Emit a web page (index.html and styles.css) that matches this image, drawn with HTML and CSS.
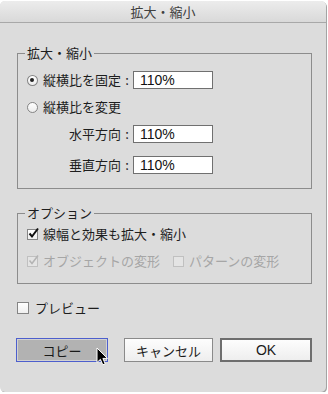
FILE: index.html
```html
<!DOCTYPE html>
<html lang="ja">
<head>
    <meta charset="UTF-8">
    <meta name="viewport" content="width=device-width, initial-scale=1.0">
    <title>拡大・縮小</title>
    <link rel="stylesheet" href="styles.css">
</head>
<body>

<div class="window">
    <div class="titlebar">拡大・縮小</div>
    <div class="content">
        <fieldset class="group group-scale">
            <legend>拡大・縮小</legend>
            <div class="row">
                <span class="caption"><span class="radio checked"></span>縦横比を固定</span>
                <span class="colon">:</span>
                <span class="input">110%</span>
            </div>
            <div class="row">
                <span class="radio"></span>縦横比を変更
            </div>
            <div class="row">
                <span class="caption right">水平方向</span>
                <span class="colon">:</span>
                <span class="input">110%</span>
            </div>
            <div class="row row-last">
                <span class="caption right">垂直方向</span>
                <span class="colon">:</span>
                <span class="input">110%</span>
            </div>
        </fieldset>

        <fieldset class="group group-options">
            <legend>オプション</legend>
            <div class="row">
                <span class="checkbox checked">
                    <svg width="13" height="13" viewBox="0 0 13 13"><path d="M2.5 6.5 L5 9.5 L11 1.5" fill="none" stroke="#111" stroke-width="2"/></svg>
                </span>線幅と効果も拡大・縮小
            </div>
            <div class="row disabled">
                <span class="checkbox checked">
                    <svg width="13" height="13" viewBox="0 0 13 13"><path d="M2.5 6.5 L5 9.5 L11 1.5" fill="none" stroke="#b4b4b4" stroke-width="1.6"/></svg>
                </span>オブジェクトの変形
                <span class="checkbox second"></span>パターンの変形
            </div>
        </fieldset>

        <div class="row preview">
            <span class="checkbox"></span>プレビュー
        </div>

        <div class="buttons">
            <button class="btn btn-copy">コピー</button>
            <button class="btn btn-cancel">キャンセル</button>
            <button class="btn btn-ok">OK</button>
        </div>
    </div>

    <svg class="cursor" width="13" height="20" viewBox="0 0 13 20">
        <path d="M1 1 L1 15.5 L4.4 12.3 L6.8 17.8 L9.2 16.8 L6.9 11.4 L11.5 11.4 Z" fill="#000" stroke="#fff" stroke-width="1"/>
    </svg>
</div>

</body>
</html>
```

FILE: styles.css
```css
body { margin: 0; background: #fff; font-family: "Noto Sans CJK JP", "Noto Sans", sans-serif; font-size: 13px; color: #1e1e1e; }

.window { position: relative; width: 326px; height: 391px; margin-top: 1px; background: #dcdcdc; border-radius: 5px; box-shadow: 1px 1px 0 #a4a4a4; overflow: hidden; }
.titlebar { height: 21px; line-height: 21px; text-align: center; color: #404040; background: linear-gradient(#ececec, #d9d9d9); border-bottom: 1px solid #a8a8a8; }
.content { padding: 22px 0 0 17px; }

/* groups */
.group { width: 295px; box-sizing: border-box; margin: 0; border: 1px solid #8c8c8c; }
.group legend { padding: 0 2px; margin-left: -2px; line-height: 16px; }
.group-scale { padding: 10px 0 14px 9px; }
.group-options { margin-top: 16px; padding: 4px 0 13px 9px; }

.row { display: flex; align-items: center; height: 18px; line-height: 18px; white-space: nowrap; }
.row + .row { margin-top: 9px; }
.row.row-last { margin-top: 13px; }

.caption { display: flex; align-items: center; width: 94px; }
.caption.right { justify-content: flex-end; }
.colon { width: 12px; text-align: center; }
.input { box-sizing: border-box; width: 80px; height: 18px; padding-left: 6px; background: #fff; border: 1px solid #707070; font-family: "Liberation Sans", Arial, sans-serif; font-size: 14px; line-height: 16px; color: #111; }

/* radio / checkbox */
.radio { box-sizing: border-box; width: 11px; height: 11px; margin-right: 5px; border: 1px solid #858585; border-radius: 50%; background: linear-gradient(#fff, #ececec); display: flex; align-items: center; justify-content: center; }
.radio.checked::after { content: ""; width: 4px; height: 4px; border-radius: 50%; background: #222; }

.checkbox { position: relative; box-sizing: border-box; width: 11px; height: 11px; margin-right: 5px; border: 1px solid #858585; background: linear-gradient(#fff, #f0f0f0); }
.checkbox svg { position: absolute; left: -1px; top: -3px; }
.checkbox.second { margin-left: 13px; }

.disabled { color: #a6a6a6; }
.disabled .checkbox { border-color: #c0c0c0; background: #e4e4e4; }

.preview { margin-top: 15px; }
.preview .checkbox { width: 12px; height: 12px; margin-right: 6px; }

/* buttons */
.buttons { display: flex; margin: 21px 0 0 -1px; }
.btn { box-sizing: border-box; height: 24px; padding: 0; font-family: "Noto Sans CJK JP", sans-serif; font-size: 13px; color: #1a1a1a; border: 1px solid #8a8a8a; background: linear-gradient(#fdfdfd, #eeeeee); }
.btn-copy { width: 92px; border-color: #4d5fcd; background: #b2b2b2; box-shadow: inset 0 0 0 1px #d2d2d2; }
.btn-cancel { width: 89px; margin-left: 16px; }
.btn-ok { width: 92px; margin-left: 7px; border: 2px solid #6e6e6e; font-family: "Liberation Sans", Arial, sans-serif; font-size: 14px; }

.cursor { position: absolute; left: 96px; top: 346px; }
```
